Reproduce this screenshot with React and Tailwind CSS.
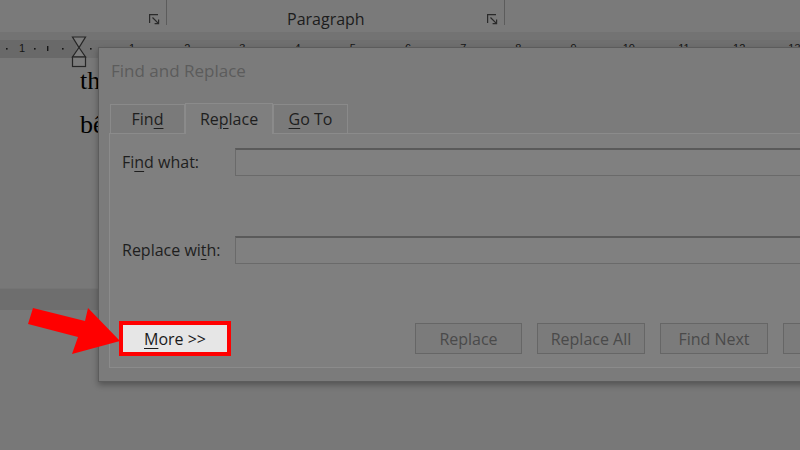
import React from 'react';

const ui = "font-['Open_Sans','Noto_Sans',sans-serif]";

const Launcher = () => (
  <svg width="11" height="11" viewBox="0 0 11 11" fill="none" stroke="#2a2a2a" strokeWidth="1.2">
    <path d="M0.6 9V0.6H9" />
    <path d="M3.5 3.5L9.6 9.6M9.6 5.6V9.6H5.6" />
  </svg>
);

const Ribbon = () => (
  <div className="h-[32px] bg-[#7a7a7a] flex items-start">
    <div className="w-[167px] h-[25px] border-r border-[#5c5c5c] flex items-end justify-end pr-[6px]">
      <Launcher />
    </div>
    <div className="w-[338px] h-[25px] border-r border-[#5c5c5c] relative flex items-end justify-end pr-[6px]">
      <span className={`absolute left-[120px] top-[8px] text-[16px] leading-[22px] text-[#1c1c1c] ${ui}`}>Paragraph</span>
      <Launcher />
    </div>
  </div>
);

const Ruler = () => {
  const nums = [1, 2, 3, 4, 5, 6, 7, 8, 9, 10, 11, 12, 13];
  return (
    <svg width="800" height="18" viewBox="0 0 800 18" className="block">
      <rect x="0" y="0" width="800" height="18" fill="#6f6f6f" />
      <rect x="0" y="0" width="76" height="18" fill="#696969" />
      <g fill="#161616" fontFamily="Liberation Sans, sans-serif" fontSize="11">
        <rect x="6" y="8" width="1.6" height="1.6" />
        <text x="19" y="12">1</text>
        <rect x="34" y="8" width="1.6" height="1.6" />
        <rect x="47" y="6" width="1.4" height="5" />
        <rect x="62" y="8" width="1.6" height="1.6" />
        <rect x="90" y="8" width="1.6" height="1.6" />
        {nums.map((n) => (
          <g key={n}>
            <text x={132 + (n - 1) * 55.2} y="12" textAnchor="middle">{n}</text>
            <rect x={104 + (n - 1) * 55.2} y="8" width="1.6" height="1.6" />
            <rect x={159 + (n - 1) * 55.2} y="8" width="1.6" height="1.6" />
          </g>
        ))}
      </g>
    </svg>
  );
};

const Hourglass = () => (
  <svg className="absolute left-[71px] top-[36px]" width="16" height="32" viewBox="0 0 16 32" fill="#7c7c7c" stroke="#262626" strokeWidth="1.2">
    <path d="M1.5 1H14.5L8 11.5Z" />
    <path d="M8 11.5L14.5 21H1.5Z" />
    <rect x="1.5" y="21" width="13" height="9.5" />
  </svg>
);

const Arrow = () => (
  <svg className="absolute left-0 top-[300px]" width="125" height="60" viewBox="0 300 125 60">
    <polygon points="33,308 85,321 88,308 120,341 72,354 78,337 28,324" fill="#ff0000" />
  </svg>
);

const U = ({ children }) => <span className="underline underline-offset-[3px]">{children}</span>;

const Tab = ({ children, active }) => (
  <div
    className={
      active
        ? 'w-[88px] h-[31px] shrink-0 -mb-px relative z-10 bg-[#7f7f7f] border border-b-0 border-[#8b8b8b] flex items-center justify-center text-[16px] text-[#1e1e1e]'
        : 'w-[75px] h-[29px] shrink-0 bg-[#7a7a7a] border border-b-0 border-[#8a8a8a] flex items-center justify-center text-[16px] text-[#1e1e1e]'
    }
  >
    {children}
  </div>
);

const Field = ({ label }) => (
  <div className="flex items-center">
    <div className="w-[125px] shrink-0 pl-[12px] text-[16px] text-[#1e1e1e]">{label}</div>
    <div className="flex-1 h-[28px] bg-[#808080] border border-[#6a6a6a] border-t-[#5a5a5a] border-t-2" />
  </div>
);

const Btn = ({ children, w }) => (
  <div className={`${w} h-[31px] shrink-0 bg-[#7b7b7b] border border-[#666666] flex items-center justify-center text-[16px] text-[#4a4a4a]`}>
    {children}
  </div>
);

const Dialog = () => (
  <div className={`absolute left-[98px] top-[47px] w-[760px] h-[335px] bg-[#7b7b7b] border border-[#5c5c5c] shadow-[0_3px_6px_rgba(0,0,0,0.3)] flex flex-col ${ui}`}>
    <div className="h-[45px] flex items-center pl-[12px] text-[17px] text-[#5c5c5c]">Find and Replace</div>
    <div className="pt-[10px] pl-[11px] flex items-end">
      <Tab>Fin<U>d</U></Tab>
      <Tab active>Re<U>p</U>lace</Tab>
      <Tab><U>G</U>o To</Tab>
    </div>
    <div className="flex-1 mx-[10px] mb-[13px] bg-[#7f7f7f] border border-[#8b8b8b] pt-[14px] flex flex-col">
      <Field label={<>Fi<U>n</U>d what:</>} />
      <div className="mt-[60px]">
        <Field label={<>Replace wi<U>t</U>h:</>} />
      </div>
      <div className="mt-[57px] pl-[9px] flex items-center">
        <div className="w-[112px] h-[35px] shrink-0 border-4 border-[#ff0000] bg-[#e6e6e6] flex items-center justify-center text-[16px] text-[#1a1a1a]">
          <span><U>M</U>ore &gt;&gt;</span>
        </div>
        <div className="ml-[184px] flex gap-[15px] shrink-0">
          <Btn w="w-[107px]">Replace</Btn>
          <Btn w="w-[108px]">Replace All</Btn>
          <Btn w="w-[108px]">Find Next</Btn>
          <Btn w="w-[108px]" />
        </div>
      </div>
    </div>
  </div>
);

export default function App() {
  return (
    <div className="relative w-[800px] h-[450px] overflow-hidden bg-[#787878]">
      <Ribbon />
      <div className="h-[8px] bg-[#737373]" />
      <Ruler />
      <div className="pt-[1px] pl-[80px] font-['Liberation_Serif',serif] text-[26px] leading-[44px] text-black">
        <div>thì</div>
        <div>bên</div>
      </div>
      <div className="mt-[141px] h-[22px] bg-[#6e6e6e] border-t border-[#747474]" />
      <Hourglass />
      <Dialog />
      <Arrow />
    </div>
  );
}
